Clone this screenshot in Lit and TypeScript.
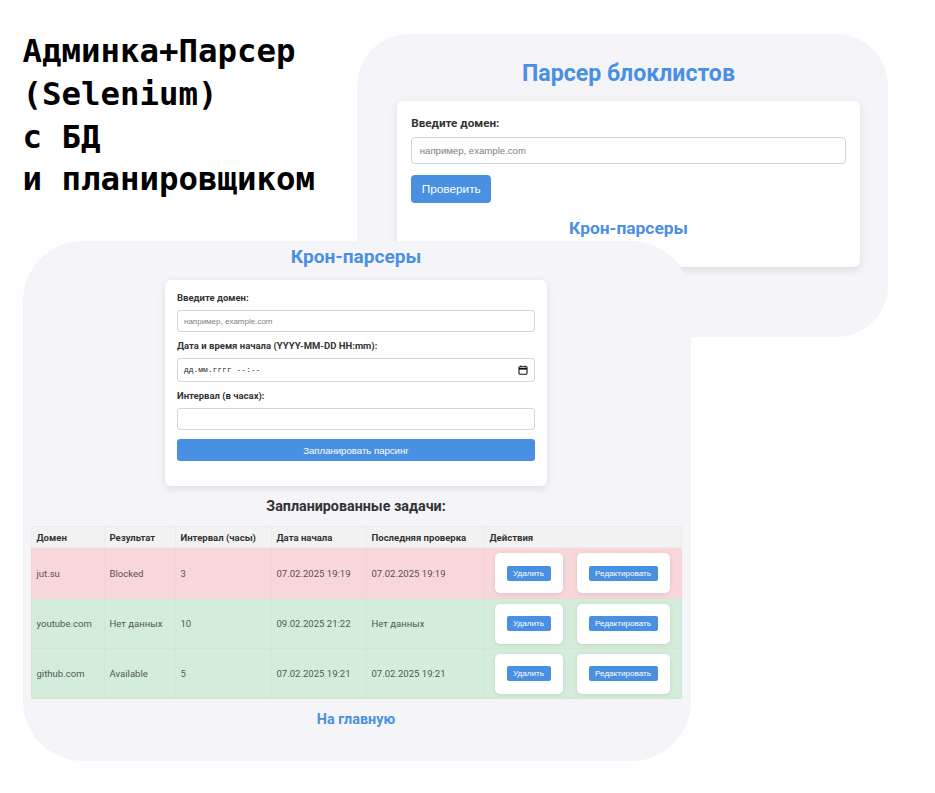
import { LitElement, html, css } from "lit";
import { customElement } from "lit/decorators.js";

type Row = { d: string; r: string; i: string; s: string; l: string; bad?: boolean };
const rows: Row[] = [
  { d: "jut.su", r: "Blocked", i: "3", s: "07.02.2025 19:19", l: "07.02.2025 19:19", bad: true },
  { d: "youtube.com", r: "Нет данных", i: "10", s: "09.02.2025 21:22", l: "Нет данных" },
  { d: "github.com", r: "Available", i: "5", s: "07.02.2025 19:21", l: "07.02.2025 19:21" },
];

@customElement("app-root")
export class AppRoot extends LitElement {
  static styles = css`
    :host { display: block; position: relative; width: 935px; height: 793px; overflow: hidden; background: #fff; font-family: Roboto, "Noto Sans", sans-serif; color: #333; }
    * { box-sizing: border-box; }
    .headline { position: absolute; left: 22.5px; top: 30px; margin: 0; font: 700 32.4px/42.8px "DejaVu Sans Mono", monospace; color: #000; white-space: nowrap; }
    .win { position: absolute; background: #f4f4f9; }
    .win-a { left: 357px; top: 34px; width: 531px; height: 303px; border-radius: 52px; display: flex; flex-direction: column; align-items: center; padding: 26px 0 0 12px; }
    .win-b { left: 23px; top: 241px; width: 668px; height: 520px; border-radius: 60px; display: flex; flex-direction: column; align-items: center; padding: 4px 9px 0 7px; }
    h1 { margin: 0; font-size: 23.1px; line-height: 28px; font-weight: 700; color: #4a90e2; }
    .card-a { margin-top: 13px; width: 463.5px; height: 166px; background: #fff; border-radius: 6px; box-shadow: 0 3px 9px rgba(0,0,0,.1); padding: 15px 14.5px; display: flex; flex-direction: column; }
    .label-a { font-size: 11.7px; line-height: 15px; font-weight: 700; color: #333; }
    .input-a { margin-top: 6px; height: 27px; width: 100%; border: 1px solid #d4d4d4; border-radius: 4px; padding: 0 7.5px; font: 9.6px "Liberation Sans", sans-serif; background: #fff; outline: none; }
    .input-a::placeholder, .input-b::placeholder { color: #808080; opacity: 1; }
    .btn-a { margin-top: 11px; align-self: flex-start; width: 80px; height: 28px; border: 0; border-radius: 4px; background: #4a90e2; color: #fff; font: 11.8px "Liberation Sans", sans-serif; padding: 0; }
    .link-a { margin-top: 14px; align-self: center; font-size: 17.4px; line-height: 22px; font-weight: 700; color: #4a90e2; }
    h2 { margin: 0; font-size: 19.1px; line-height: 24px; font-weight: 700; color: #4a90e2; }
    .card-b { margin-top: 11px; width: 382px; height: 206px; background: #fff; border-radius: 6px; box-shadow: 0 2px 8px rgba(0,0,0,.1); padding: 12px; display: flex; flex-direction: column; }
    .label-b { font-size: 9.5px; line-height: 12px; font-weight: 700; color: #333; margin-bottom: 6px; }
    .input-b { height: 22px; width: 100%; border: 1px solid #d4d4d4; border-radius: 3px; padding: 0 6px; font: 8px "Liberation Sans", sans-serif; background: #fff; outline: none; margin-bottom: 8px; flex: none; }
    .date { height: 24px; display: flex; align-items: center; justify-content: space-between; padding: 0 6px 0 6px; font: 7.8px "Liberation Mono", monospace; letter-spacing: .1px; color: #222; margin-bottom: 8px; }
    .date svg { width: 10px; height: 10px; display: block; }
    .tall { height: 22px; margin-bottom: 9px; }
    .btn-b { width: 100%; height: 22px; flex: none; border: 0; border-radius: 3px; background: #4a90e2; color: #fff; font: 9.6px "Liberation Sans", sans-serif; padding: 0; }
    h3 { margin: 11px 0 0; font-size: 14.3px; line-height: 18px; font-weight: 700; color: #333; }
    table { margin: 11px 0 0 0; width: 650px; border-collapse: collapse; table-layout: fixed; font-size: 9.55px; flex: none; }
    th, td { border: 1px solid #ececec; padding: 0 5px; text-align: left; overflow: hidden; white-space: nowrap; }
    th { height: 21px; background: #f2f2f2; font-weight: 700; color: #333; }
    td { height: 50px; }
    tr.bad td { height: 51px; background: #f8d7da; color: #5e4e50; border-color: #f4d3d6; }
    tr.ok td { background: #d4edda; color: #4d5a50; border-color: #cfe8d5; }
    td.acts { padding: 0 10px; }
    .acts-row { display: flex; gap: 14px; }
    .box { height: 40px; background: #fff; border-radius: 5px; box-shadow: 0 1px 4px rgba(0,0,0,.1); display: flex; align-items: center; justify-content: center; }
    .box.del { width: 68px; }
    .box.edit { width: 93px; }
    .mini { height: 15px; border: 0; border-radius: 2px; background: #4a90e2; color: #fff; font: 8.1px "Liberation Sans", sans-serif; padding: 0; }
    .del .mini { width: 44px; }
    .edit .mini { width: 69px; }
    .link-b { margin-top: 12px; font-size: 14.4px; line-height: 18px; font-weight: 700; color: #4a90e2; }
  `;

  render() {
    return html`
      <section class="win win-a">
        <h1>Парсер блоклистов</h1>
        <div class="card-a">
          <label class="label-a">Введите домен:</label>
          <input class="input-a" placeholder="например, example.com" />
          <button class="btn-a">Проверить</button>
          <a class="link-a">Крон-парсеры</a>
        </div>
      </section>
      <section class="win win-b">
        <h2>Крон-парсеры</h2>
        <div class="card-b">
          <label class="label-b">Введите домен:</label>
          <input class="input-b" placeholder="например, example.com" />
          <label class="label-b">Дата и время начала (YYYY-MM-DD HH:mm):</label>
          <div class="input-b date">
            <span>дд.мм.гггг --:--</span>
            <svg viewBox="0 0 12 12" fill="none" stroke="#111" stroke-width="1.3"><rect x="1.2" y="2" width="9.6" height="9" rx="1"/><path d="M1.2 4.6h9.6" stroke-width="2"/><path d="M3.5.6v2M8.5.6v2"/></svg>
          </div>
          <label class="label-b">Интервал (в часах):</label>
          <input class="input-b tall" />
          <button class="btn-b">Запланировать парсинг</button>
        </div>
        <h3>Запланированные задачи:</h3>
        <table>
          <colgroup>
            <col style="width:73px" /><col style="width:71px" /><col style="width:96px" /><col style="width:95px" /><col style="width:118px" /><col style="width:197px" />
          </colgroup>
          <thead>
            <tr><th>Домен</th><th>Результат</th><th>Интервал (часы)</th><th>Дата начала</th><th>Последняя проверка</th><th>Действия</th></tr>
          </thead>
          <tbody>
            ${rows.map(
              (r) => html`<tr class=${r.bad ? "bad" : "ok"}>
                <td>${r.d}</td><td>${r.r}</td><td>${r.i}</td><td>${r.s}</td><td>${r.l}</td>
                <td class="acts"><div class="acts-row">
                  <div class="box del"><button class="mini">Удалить</button></div>
                  <div class="box edit"><button class="mini">Редактировать</button></div>
                </div></td>
              </tr>`
            )}
          </tbody>
        </table>
        <a class="link-b">На главную</a>
      </section>
      <p class="headline">Админка+Парсер<br />(Selenium)<br />с БД<br />и планировщиком</p>
    `;
  }
}
